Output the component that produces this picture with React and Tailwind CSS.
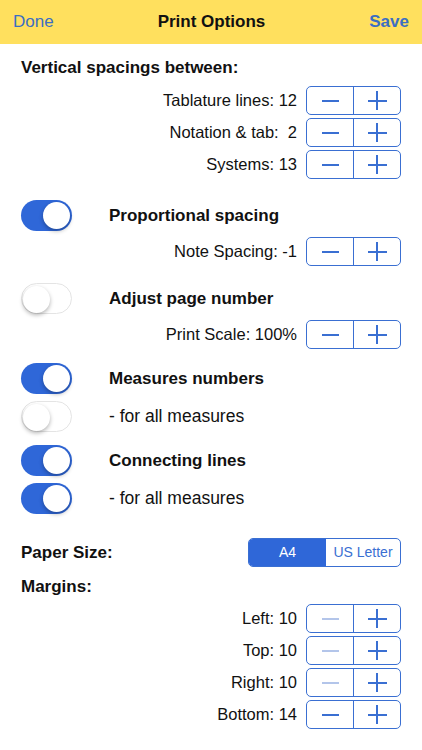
const Stepper = ({ minusDisabled }) => (
  <div className="flex h-[29px] w-[95px] rounded-[5px] border border-[#3a6fd2]">
    <div className="flex flex-1 items-center justify-center border-r border-[#3a6fd2]">
      <div className={`h-[2px] w-[17px] ${minusDisabled ? "bg-[#b3c5ea]" : "bg-[#3a6fd2]"}`}></div>
    </div>
    <div className="relative flex flex-1 items-center justify-center">
      <div className="h-[2px] w-[19px] bg-[#3a6fd2]"></div>
      <div className="absolute h-[19px] w-[2px] bg-[#3a6fd2]"></div>
    </div>
  </div>
);

const StepperRow = ({ label, minusDisabled, className = "" }) => (
  <div className={`flex items-center justify-end gap-[9px] pr-[21px] ${className}`}>
    <span className="text-[16.5px] text-[#111]">{label}</span>
    <Stepper minusDisabled={minusDisabled} />
  </div>
);

const Toggle = ({ on }) => (
  <div
    className={`relative h-[31px] w-[51px] shrink-0 rounded-full ${
      on ? "bg-[#2f67d8]" : "bg-white border-[1.5px] border-[#e4e4e4]"
    }`}
  >
    <div
      className={`absolute top-[2px] h-[27px] w-[27px] rounded-full bg-white shadow-[0_2px_4px_rgba(0,0,0,0.3)] ${
        on ? "right-[2px]" : "left-[0.5px] top-[0.5px]"
      }`}
    ></div>
  </div>
);

const ToggleRow = ({ on, label, bold, className = "" }) => (
  <div className={`flex items-center pl-[21px] ${className}`}>
    <Toggle on={on} />
    <span className={`ml-[37px] text-[#111] ${bold ? "text-[17px] font-bold" : "text-[17.5px]"}`}>{label}</span>
  </div>
);

export default function App() {
  return (
    <div className="h-[750px] w-[422px] overflow-hidden bg-white font-['Liberation_Sans',Arial,sans-serif]">
      {/* Nav bar */}
      <div className="flex h-[44px] items-center justify-between bg-[#ffe05e] px-[13px]">
        <span className="text-[17px] text-[#3b6ec3]">Done</span>
        <span className="text-[17px] font-bold text-[#111]">Print Options</span>
        <span className="text-[17px] font-bold text-[#3b6ec3]">Save</span>
      </div>

      <div className="mt-[12px] flex h-[24px] items-center pl-[21px] text-[17px] font-bold text-[#111]">
        Vertical spacings between:
      </div>

      <div className="mt-[6px] flex flex-col gap-[3px]">
        <StepperRow label="Tablature lines: 12" />
        <StepperRow label={"Notation & tab:\u00a0 2"} />
        <StepperRow label="Systems: 13" />
      </div>

      <ToggleRow on bold label="Proportional spacing" className="mt-[21px]" />
      <StepperRow label="Note Spacing: -1" className="mt-[6px]" />

      <ToggleRow bold label="Adjust page number" className="mt-[17px]" />
      <StepperRow label="Print Scale: 100%" className="mt-[6px]" />

      <ToggleRow on bold label="Measures numbers" className="mt-[14px]" />
      <ToggleRow label="- for all measures" className="mt-[7px]" />

      <ToggleRow on bold label="Connecting lines" className="mt-[13px]" />
      <ToggleRow on label="- for all measures" className="mt-[7px]" />

      <div className="mt-[24px] flex items-center justify-between pl-[21px] pr-[21px]">
        <span className="text-[17px] font-bold text-[#111]">Paper Size:</span>
        <div className="flex h-[29px] w-[153px] overflow-hidden rounded-[5px] border border-[#3a6fd2] text-[14px]">
          <div className="flex w-[77px] items-center justify-center bg-[#2f67d8] text-white">A4</div>
          <div className="flex flex-1 items-center justify-center text-[#3a6fd2]">US Letter</div>
        </div>
      </div>

      <div className="mt-[8px] flex h-[24px] items-center pl-[21px] text-[17px] font-bold text-[#111]">
        Margins:
      </div>

      <div className="mt-[5px] flex flex-col gap-[3px]">
        <StepperRow label="Left: 10" minusDisabled />
        <StepperRow label="Top: 10" minusDisabled />
        <StepperRow label="Right: 10" minusDisabled />
        <StepperRow label="Bottom: 14" />
      </div>
    </div>
  );
}
